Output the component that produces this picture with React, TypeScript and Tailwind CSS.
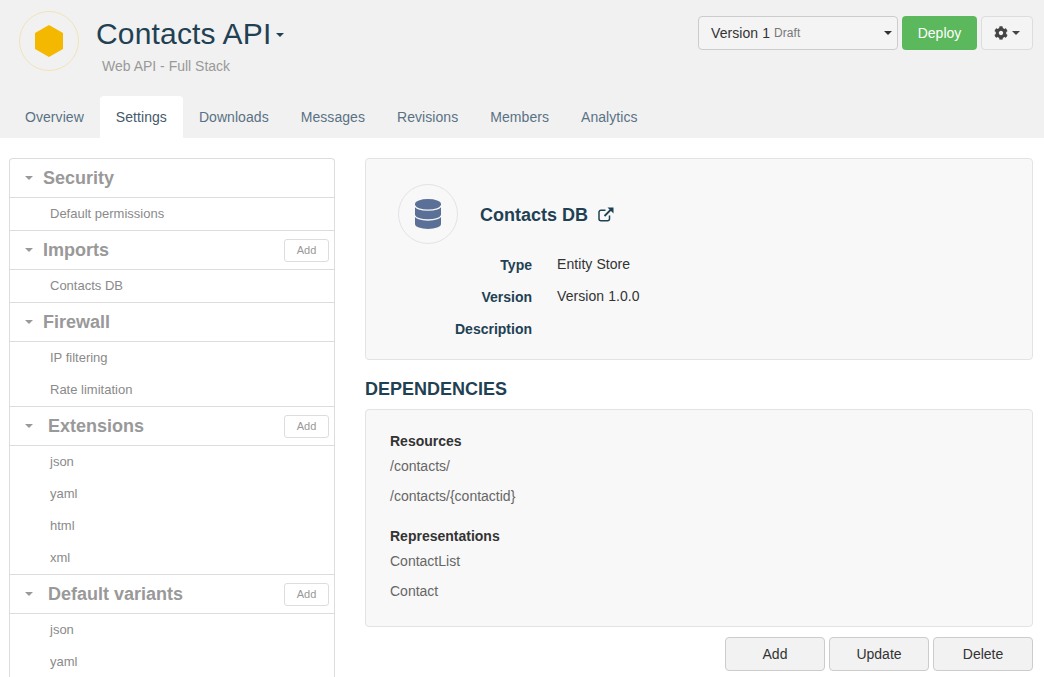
import { FaCog } from "react-icons/fa";

const tabs = ["Overview", "Settings", "Downloads", "Messages", "Revisions", "Members", "Analytics"];

const sections = [
  { title: "Security", items: ["Default permissions"], add: false, wide: false },
  { title: "Imports", items: ["Contacts DB"], add: true, wide: false },
  { title: "Firewall", items: ["IP filtering", "Rate limitation"], add: false, wide: false },
  { title: "Extensions", items: ["json", "yaml", "html", "xml"], add: true, wide: true },
  { title: "Default variants", items: ["json", "yaml"], add: true, wide: true },
];

function Caret({ className }: { className: string }) {
  return <span className={`inline-block h-0 w-0 border-x-4 border-t-4 border-x-transparent ${className}`} />;
}

// font-awesome 4 style external link, the package only has the heavier one
function ExternalLink() {
  return (
    <svg width="16" height="15" viewBox="0 0 16 15" fill="none" className="ml-[10px] text-[#1f4153]">
      <path d="M11.5 8.5v3.2a2 2 0 0 1-2 2H3a2 2 0 0 1-2-2V5.2a2 2 0 0 1 2-2h4.5" stroke="currentColor" strokeWidth="1.5" />
      <path d="M6.5 9 13 2.5" stroke="currentColor" strokeWidth="1.8" />
      <path d="M9.5 0.5H15.5V6.5Z" fill="currentColor" />
    </svg>
  );
}

function DatabaseIcon() {
  return (
    <svg width="26" height="30" viewBox="0 0 26 30" fill="none">
      <path d="M0 5A13 5 0 0 1 26 5V25A13 5 0 0 1 0 25Z" fill="#5b7097" />
      <path d="M0 6.6A13 4.6 0 0 0 26 6.6" stroke="#f8f8f8" strokeWidth="1.3" />
      <path d="M0 16.4A13 4.6 0 0 0 26 16.4" stroke="#f8f8f8" strokeWidth="1.3" />
    </svg>
  );
}

function Sidebar() {
  return (
    <div className="w-[326px] shrink-0 rounded-t border border-b-0 border-[#ddd] bg-white">
      {sections.map((section) => (
        <div key={section.title} className="border-b border-[#ddd] last:border-b-0">
          <div className="flex h-[39px] items-center border-b border-[#ddd] pr-[5px] pl-[15px]">
            <Caret className="border-t-[#999]" />
            <h3 className={`${section.wide ? "ml-[15px]" : "ml-[10px]"} flex-1 text-lg font-bold text-[#999]`}>
              {section.title}
            </h3>
            {section.add && (
              <button className="h-[23px] w-[45px] rounded-[3px] border border-[#ddd] bg-white pt-px text-[11px] text-[#999]">
                Add
              </button>
            )}
          </div>
          {section.items.map((item) => (
            <div key={item} className="flex h-8 items-center pl-10 text-[13px] text-[#8a8a8a]">
              {item}
            </div>
          ))}
        </div>
      ))}
    </div>
  );
}

function Detail({ label, value }: { label: string; value?: string }) {
  return (
    <div className="flex h-8 text-sm">
      <div className="w-[166px] text-right leading-[22px] font-bold text-[#1f4153]">{label}</div>
      <div className="ml-[25px] leading-5 tracking-[0.07px] text-[#333]">{value}</div>
    </div>
  );
}

export default function App() {
  return (
    <div className="h-[677px] overflow-hidden bg-white font-['Liberation_Sans',Arial,sans-serif] text-sm">
      <header className="h-[138px] bg-[#f1f1f1]">
        <div className="flex h-24 items-start">
          <div className="mt-[11px] ml-[19px] flex h-[60px] w-[60px] items-center justify-center rounded-full border border-[#f3e3b5]">
            <svg width="28" height="32" viewBox="0 0 28 32">
              <polygon points="14,0 28,8 28,24 14,32 0,24 0,8" fill="#f4b800" />
            </svg>
          </div>
          <div className="ml-[17px] flex-1 pt-[15px]">
            <div className="flex items-center text-[30px] leading-[37px] tracking-[0.17px] text-[#1f4153]">
              Contacts API
              <Caret className="mt-0.5 ml-[5px] border-t-[#1f4153]" />
            </div>
            <div className="mt-1 ml-1.5 text-sm text-[#999]">Web API - Full Stack</div>
          </div>
          <div className="mt-4 mr-[11px] flex gap-1">
            <div className="flex h-[34px] w-[200px] items-center rounded border border-[#ccc] bg-[#f4f4f4] pr-[5px] pl-3 tracking-[0.07px] text-[#333]">
              Version 1
              <span className="ml-1 flex-1 text-xs text-[#777]">Draft</span>
              <Caret className="border-t-[#333]" />
            </div>
            <button className="h-[34px] w-[75px] rounded bg-[#5cb85c] text-white">Deploy</button>
            <button className="flex h-[34px] w-[52px] items-center justify-center gap-1 rounded border border-[#ddd] bg-[#f4f4f4] text-[#444]">
              <FaCog size={14} />
              <Caret className="border-t-[#444]" />
            </button>
          </div>
        </div>
        <nav className="flex h-[42px] pl-[9px] tracking-[0.06px]">
          {tabs.map((tab) => (
            <div
              key={tab}
              className={`flex items-center rounded-t px-4 ${tab === "Settings" ? "bg-white text-[#44596b]" : "text-[#5a7184]"}`}
            >
              {tab}
            </div>
          ))}
        </nav>
      </header>

      <main className="flex items-start pt-5 pl-[9px]">
        <Sidebar />
        <div className="ml-[30px] w-[668px]">
          <section className="h-[202px] rounded border border-[#e3e3e3] bg-[#f8f8f8]">
            <div className="flex items-center pt-[25px] pl-8">
              <div className="flex h-[60px] w-[60px] items-center justify-center rounded-full border border-[#e3e3e8]">
                <DatabaseIcon />
              </div>
              <h2 className="mt-0.5 ml-[22px] text-lg font-bold text-[#1f4153]">Contacts DB</h2>
              <ExternalLink />
            </div>
            <div className="mt-[10px]">
              <Detail label="Type" value="Entity Store" />
              <Detail label="Version" value="Version 1.0.0" />
              <Detail label="Description" />
            </div>
          </section>
          <h2 className="mt-[19px] text-lg leading-5 font-bold text-[#1f4153]">DEPENDENCIES</h2>
          <section className="mt-[10px] h-[218px] rounded border border-[#e3e3e3] bg-[#f8f8f8] pt-6 pl-6 text-[#666]">
            <h4 className="leading-[15px] font-bold text-[#333]">Resources</h4>
            <p className="mt-[10px] leading-[15px]">/contacts/</p>
            <p className="mt-[15px] leading-[15px]">/contacts/{"{contactid}"}</p>
            <h4 className="mt-[25px] leading-[15px] font-bold text-[#333]">Representations</h4>
            <p className="mt-[10px] leading-[15px]">ContactList</p>
            <p className="mt-[15px] leading-[15px]">Contact</p>
          </section>
          <div className="mt-[10px] flex justify-end gap-1">
            {["Add", "Update", "Delete"].map((label) => (
              <button key={label} className="h-[34px] w-[100px] rounded border border-[#ccc] bg-[#f2f2f2] text-[#333]">
                {label}
              </button>
            ))}
          </div>
        </div>
      </main>
    </div>
  );
}
